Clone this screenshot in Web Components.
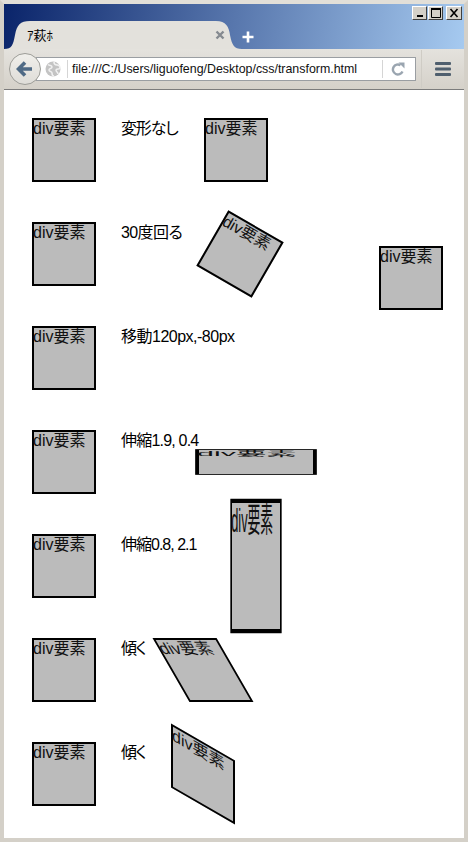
<!DOCTYPE html>
<html lang="ja">
<head>
<meta charset="utf-8">
<title>transform</title>
<style>
    html, body { margin: 0; padding: 0; height: 100%; background: #fff; }
    body { font-family: "Noto Sans CJK JP", "Liberation Sans", sans-serif; color: #000; }
</style>
</head>
<body>
<browser-window>
    <transform-row label="変形なし" label-width="58" spacing="-1.15"></transform-row>
    <transform-row label="30度回る" label-width="62" spacing="-0.6" transform="rotate(30deg)"></transform-row>
    <transform-row label="移動120px,-80px" label-width="113" spacing="-0.5" transform="translate(120px, -80px)"></transform-row>
    <transform-row label="伸縮1.9, 0.4" label-width="78" spacing="-0.8" transform="scale(1.9, 0.4)"></transform-row>
    <transform-row label="伸縮0.8, 2.1" label-width="78" spacing="-1" transform="scale(0.8, 2.1)"></transform-row>
    <transform-row label="傾く" label-width="25" spacing="-1.4" transform="skewX(30deg)"></transform-row>
    <transform-row label="傾く" label-width="25" spacing="-1.4" transform="skewY(30deg)"></transform-row>
</browser-window>

<script>
class CaptionButtons extends HTMLElement {
    constructor() {
        super();
        this.attachShadow({ mode: 'open' });
    }

    connectedCallback() {
        this.shadowRoot.innerHTML = `
            <style>
                :host { display: flex; gap: 1px; margin-top: 2px; margin-right: 2px; }
                .btn {
                    width: 15px;
                    height: 14px;
                    box-sizing: border-box;
                    background: #d4d0c8;
                    border: 1px solid;
                    border-color: #fff #404040 #404040 #fff;
                    display: flex;
                    align-items: center;
                    justify-content: center;
                }
                .btn.close { width: 16px; margin-left: 2px; }
                svg { display: block; }
            </style>
            <div class="btn"><svg width="12" height="10"><rect x="3" y="7" width="6" height="2" fill="#000"/></svg></div>
            <div class="btn"><svg width="12" height="10"><path d="M1.5 1.5h9v8h-9z" fill="none" stroke="#000"/><rect x="1" y="0" width="10" height="2" fill="#000"/></svg></div>
            <div class="btn close"><svg width="12" height="10"><path d="M2.5 1l7 8M9.5 1l-7 8" stroke="#000" stroke-width="1.6" fill="none"/></svg></div>
        `;
    }
}

class BrowserTab extends HTMLElement {
    constructor() {
        super();
        this.attachShadow({ mode: 'open' });
    }

    connectedCallback() {
        this.shadowRoot.innerHTML = `
            <style>
                :host {
                    display: block;
                    position: relative;
                    width: 238px;
                    height: 28px;
                    align-self: flex-end;
                    flex: none;
                }
                svg.shape { position: absolute; left: 0; top: 0; }
                .inner {
                    position: relative;
                    display: flex;
                    align-items: center;
                    height: 100%;
                    padding: 0 17px 0 23px;
                    box-sizing: border-box;
                    font-size: 13px;
                    color: #000;
                }
                .title { flex: 1; margin-top: -1px; }
                svg.close { display: block; margin-top: -1px; }
            </style>
            <svg class="shape" width="238" height="28">
                <path d="M0 28 C8 28 9 24 11 14 C13 4 16 0 26 0 L212 0 C222 0 225 6 226 14 C228 24 230 28 238 28 Z" fill="#e3e1dc"/>
            </svg>
            <div class="inner">
                <span class="title"><slot></slot></span>
                <svg class="close" width="10" height="10"><path d="M1.5 1.5l7 7M8.5 1.5l-7 7" stroke="#858a90" stroke-width="2.4" fill="none"/></svg>
            </div>
        `;
    }
}

class NavBar extends HTMLElement {
    constructor() {
        super();
        this.attachShadow({ mode: 'open' });
    }

    connectedCallback() {
        this.shadowRoot.innerHTML = `
            <style>
                :host {
                    display: flex;
                    align-items: center;
                    height: 41px;
                    flex: none;
                    padding-left: 5px;
                    box-sizing: border-box;
                    background: linear-gradient(#e4e2dd, #d5d1c9);
                    border-bottom: 1px solid #7c7c7c;
                }
                .back {
                    position: relative;
                    z-index: 1;
                    width: 32px;
                    height: 32px;
                    box-sizing: border-box;
                    flex: none;
                    border-radius: 50%;
                    border: 1px solid #9d9d98;
                    background: linear-gradient(#f0efeb, #dfddd8);
                    display: flex;
                    align-items: center;
                    justify-content: center;
                }
                .url {
                    width: 380px;
                    height: 24px;
                    margin-left: -5px;
                    box-sizing: border-box;
                    flex: none;
                    background: #fff;
                    border: 1px solid #9a9ea2;
                    display: flex;
                    align-items: center;
                    padding-left: 8px;
                    font-family: "Liberation Sans", sans-serif;
                    font-size: 12.4px;
                    color: #111;
                }
                .globe { flex: none; margin-right: 6px; }
                .divider { width: 1px; height: 18px; background: #d5d5d5; flex: none; }
                .text { flex: 1; padding-left: 4px; white-space: nowrap; overflow: hidden; }
                .reload { flex: none; margin: 0 10px 0 8px; display: block; }
                .sep { width: 1px; height: 38px; background: #cfccc5; margin-left: 5px; flex: none; }
                .menu { flex: none; margin-left: 13px; display: block; }
            </style>
            <div class="back">
                <svg width="18" height="16"><path d="M9 1.5L2.5 8 9 14.5M3 8h13" stroke="#4f6a85" stroke-width="3.6" fill="none"/></svg>
            </div>
            <div class="url">
                <svg class="globe" width="16" height="16" viewBox="0 0 16 16">
                    <circle cx="8" cy="8" r="7.5" fill="#c4c4c4"/>
                    <path d="M3 3.5C5 5 7 4 7 6S4 7 4 9s3 1 3 3 1 3 2 3M9 1c0 2 1 3 3 3s3 1 3 3-4 0-4 2 2 2 2 4" stroke="#f2f2f2" stroke-width="1.5" fill="none"/>
                </svg>
                <span class="divider"></span>
                <span class="text"><slot></slot></span>
                <span class="divider"></span>
                <svg class="reload" width="14" height="14" viewBox="0 0 14 14">
                    <path d="M11.5 9.5A5 5 0 1 1 9.5 3.2" stroke="#9aa5b0" stroke-width="2.4" fill="none"/>
                    <path d="M7.5 0.5h6v6z" fill="#9aa5b0"/>
                </svg>
            </div>
            <span class="sep"></span>
            <svg class="menu" width="16" height="14">
                <rect y="0" width="16" height="3" rx="1" fill="#4f5f6e"/>
                <rect y="5.5" width="16" height="3" rx="1" fill="#4f5f6e"/>
                <rect y="11" width="16" height="3" rx="1" fill="#4f5f6e"/>
            </svg>
        `;
    }
}

class DemoBox extends HTMLElement {
    constructor() {
        super();
        this.attachShadow({ mode: 'open' });
    }

    connectedCallback() {
        const transform = this.getAttribute('transform') || 'none';
        this.shadowRoot.innerHTML = `
            <style>
                :host {
                    display: block;
                    flex: none;
                    width: 64px;
                    height: 64px;
                    box-sizing: border-box;
                    background: #bbb;
                    border: 2px solid #000;
                    font-size: 16px;
                    line-height: 14px;
                    white-space: nowrap;
                    transform: ${transform};
                }
                .txt { font-family: "Liberation Sans", "Noto Sans CJK JP", sans-serif; margin-left: -1px; color: #111; font-weight: 400; }
            </style>
            <span class="txt">div要素</span>
        `;
    }
}

class TransformRow extends HTMLElement {
    constructor() {
        super();
        this.attachShadow({ mode: 'open' });
    }

    connectedCallback() {
        const label = this.getAttribute('label');
        const labelWidth = this.getAttribute('label-width');
        const spacing = this.getAttribute('spacing') || '0';
        const transform = this.getAttribute('transform') || 'none';
        this.shadowRoot.innerHTML = `
            <style>
                :host { display: flex; gap: 25px; height: 64px; align-items: flex-start; }
                .label {
                    width: ${labelWidth}px;
                    flex: none;
                    padding-top: 2px;
                    font-size: 16px;
                    line-height: 18px;
                    white-space: nowrap;
                    font-family: "Liberation Sans", "Noto Sans CJK JP", sans-serif;
                    font-feature-settings: "palt";
                    letter-spacing: ${spacing}px;
                }
            </style>
            <demo-box></demo-box>
            <div class="label">${label}</div>
            <demo-box transform="${transform}"></demo-box>
        `;
    }
}

class BrowserWindow extends HTMLElement {
    constructor() {
        super();
        this.attachShadow({ mode: 'open' });
    }

    connectedCallback() {
        this.shadowRoot.innerHTML = `
            <style>
                :host {
                    display: flex;
                    flex-direction: column;
                    height: 842px;
                    box-sizing: border-box;
                    border: 4px solid #d4d0c8;
                    border-top-color: #e2dfd8;
                    overflow: hidden;
                }
                .titlebar {
                    display: flex;
                    height: 45px;
                    flex: none;
                    background: linear-gradient(100deg, #0a246a, #a6caf0);
                }
                .newtab { align-self: flex-end; margin: 0 0 6px 0; display: block; }
                .spacer { flex: 1; }
                .content {
                    flex: 1;
                    display: flex;
                    flex-direction: column;
                    gap: 40px;
                    padding: 28px 0 0 28px;
                    background: #fff;
                    overflow: hidden;
                }
            </style>
            <div class="titlebar">
                <browser-tab>ｱ萩ﾎ</browser-tab>
                <svg class="newtab" width="12" height="12"><path d="M6 0.5v11M0.5 6h11" stroke="#fff" stroke-width="2.6" fill="none"/></svg>
                <div class="spacer"></div>
                <caption-buttons></caption-buttons>
            </div>
            <nav-bar>file:///C:/Users/liguofeng/Desktop/css/transform.html</nav-bar>
            <div class="content"><slot></slot></div>
        `;
    }
}

customElements.define('caption-buttons', CaptionButtons);
customElements.define('browser-tab', BrowserTab);
customElements.define('nav-bar', NavBar);
customElements.define('demo-box', DemoBox);
customElements.define('transform-row', TransformRow);
customElements.define('browser-window', BrowserWindow);
</script>
</body>
</html>
